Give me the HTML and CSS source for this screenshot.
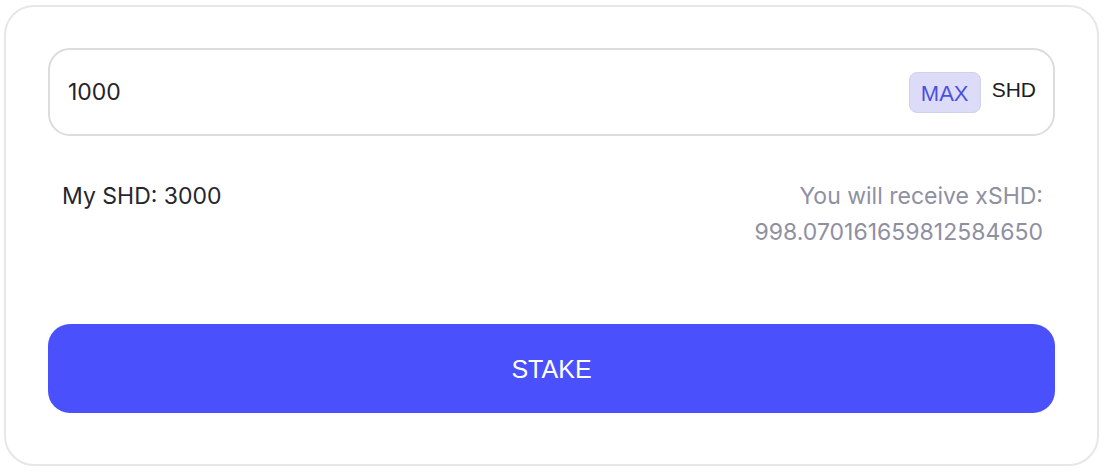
FILE: index.html
```html
<!DOCTYPE html>
<html lang="en">
<head>
    <meta charset="UTF-8">
    <meta name="viewport" content="width=device-width, initial-scale=1.0">
    <title>Stake SHD</title>
    <link rel="stylesheet" href="styles.css">
</head>
<body>

<div class="stake-card">
    <div class="amount-box">
        <input class="amount-input" type="text" value="1000">
        <button class="max-btn">MAX</button>
        <span class="token">SHD</span>
    </div>

    <div class="info-row">
        <div class="balance">My SHD: 3000</div>
        <div class="receive">
            You will receive xSHD:<br>
            998.070161659812584650
        </div>
    </div>

    <button class="stake-btn">STAKE</button>
</div>

</body>
</html>
```

FILE: styles.css
```css
body {
    margin: 0;
    background-color: #fff;
    font-family: Inter, "Noto Sans", sans-serif;
}
.stake-card {
    margin: 5px 11px 0 4px;
    height: 461px;
    box-sizing: border-box;
    border: 2px solid #e6e6eb;
    border-radius: 30px;
    padding: 41px 42px 0 42px;
}
.amount-box {
    display: flex;
    align-items: center;
    height: 88px;
    box-sizing: border-box;
    border: 2px solid #dcdcdf;
    border-radius: 22px;
    padding: 0 17px 0 18px;
}
.amount-input {
    flex: 1;
    border: none;
    outline: none;
    background: none;
    font-family: Inter, "Noto Sans", sans-serif;
    font-size: 23px;
    color: #23232b;
    padding: 0;
}
.max-btn {
    width: 72px;
    height: 41px;
    background-color: #dcdcf9;
    border: 1px solid #cfd0ea;
    border-radius: 8px;
    color: #4b4fe0;
    font-family: "Liberation Sans", Arial, sans-serif;
    font-size: 22px;
    padding: 4px 0 0 0;
    margin-right: 11px;
}
.token {
    font-family: "Liberation Sans", Arial, sans-serif;
    font-size: 21px;
    color: #1c1c22;
    margin-bottom: 4px;
}
.info-row {
    display: flex;
    justify-content: space-between;
    align-items: flex-start;
    padding: 42px 12px 0 14px;
    height: 146px;
}
.balance {
    font-size: 23px;
    color: #26262e;
    line-height: 36px;
}
.receive {
    font-size: 23px;
    color: #8f8fa2;
    line-height: 36px;
    text-align: right;
}
.stake-btn {
    display: block;
    width: 100%;
    height: 89px;
    border: none;
    border-radius: 22px;
    background-color: #4a50fc;
    color: #fff;
    font-family: "Liberation Sans", Arial, sans-serif;
    font-size: 25px;
    padding-top: 3px;
}
```
